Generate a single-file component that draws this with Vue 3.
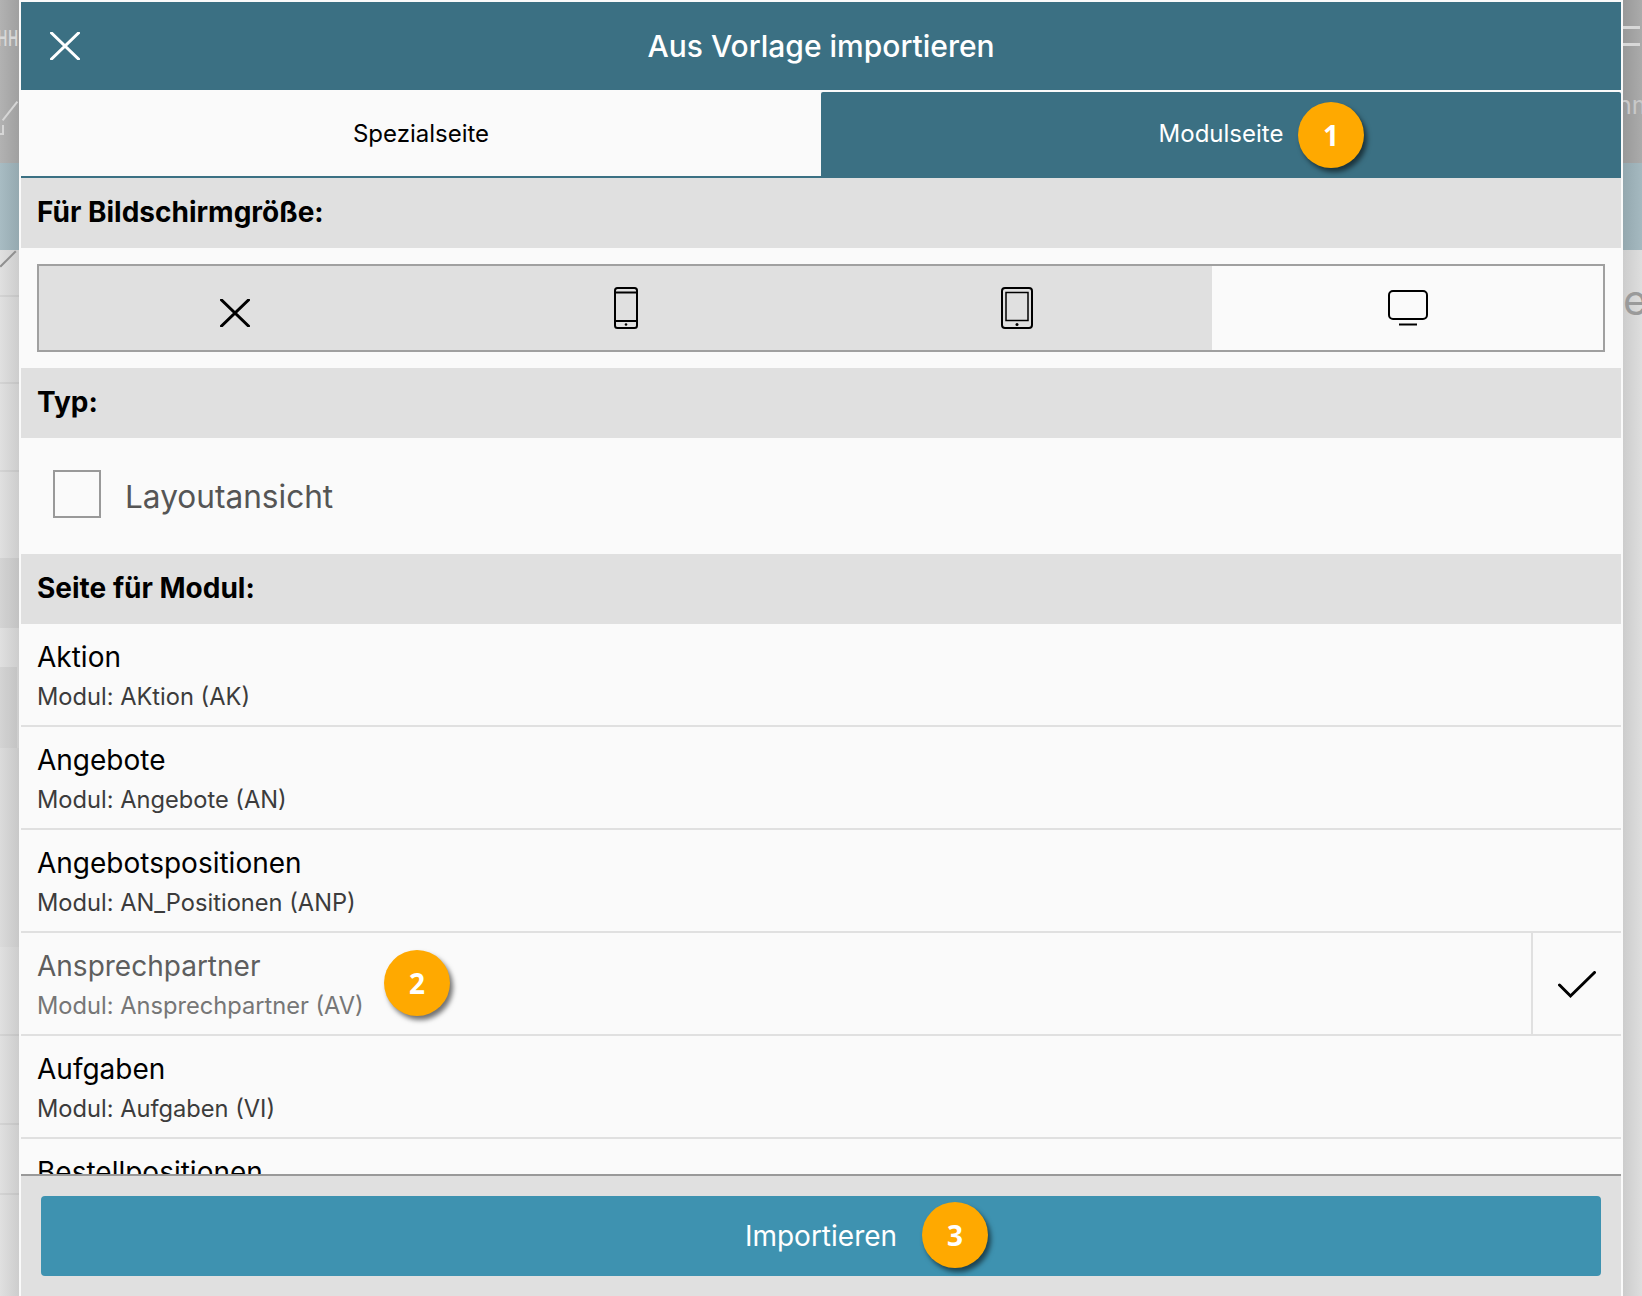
<script setup>
const rows = [
  { title: 'Aktion', sub: 'Modul: AKtion (AK)' },
  { title: 'Angebote', sub: 'Modul: Angebote (AN)' },
  { title: 'Angebotspositionen', sub: 'Modul: AN_Positionen (ANP)' },
  { title: 'Ansprechpartner', sub: 'Modul: Ansprechpartner (AV)', selected: true },
  { title: 'Aufgaben', sub: 'Modul: Aufgaben (VI)' },
  { title: 'Bestellpositionen', sub: 'Modul: Bestellpositionen (BP)' }
]
</script>

<template>
  <div class="page">
    <div class="strip left">
      <div class="band dark">
        <span class="ghost hh">HH</span>
        <span class="slash"></span>
        <span class="corner"></span>
      </div>
      <div class="band blue"></div>
      <div class="band light first">
        <span class="slash low"></span>
        <i class="rule r1"></i>
        <i class="rule r2"></i>
        <i class="rule r3"></i>
        <i class="patch p1"></i>
        <i class="patch p2"></i>
        <i class="patch p3"></i>
        <i class="rule r4"></i>
        <i class="rule r5"></i>
        <i class="rule r6"></i>
      </div>
    </div>

    <main class="modal">
      <header class="head">
        <svg class="close" width="30" height="28" viewBox="0 0 30 28"><path d="M1.5 1 28.500 27M28.500 1 1.500 27" /></svg>
        <h1>Aus Vorlage importieren</h1>
      </header>

      <nav class="tabs">
        <div class="tab">Spezialseite</div>
        <div class="tab active">Modulseite<span class="badge b1">1</span></div>
      </nav>

      <h2 class="section">Für Bildschirmgröße:</h2>
      <div class="pad">
        <div class="seg">
          <div class="seg-item">
            <svg class="x-icon" width="30" height="28" viewBox="0 0 30 28"><path d="M1.500 1 28.500 27M28.500 1 1.500 27" /></svg>
          </div>
          <div class="seg-item">
            <svg width="24" height="42" viewBox="0 0 24 42"><rect x="1" y="1" width="22" height="40" rx="2.500" /><path d="M1 5.500H23M1 34H23" /><circle cx="12" cy="37.500" r="1.300" class="dot" /></svg>
          </div>
          <div class="seg-item">
            <svg width="32" height="42" viewBox="0 0 32 42"><rect x="1" y="1" width="30" height="40" rx="3" /><rect x="5" y="5.500" width="22" height="28" class="thin" /><circle cx="16" cy="37.500" r="1.500" class="dot" /></svg>
          </div>
          <div class="seg-item on">
            <svg width="40" height="36" viewBox="0 0 40 36"><rect x="1" y="1" width="38" height="28" rx="4" /><path d="M11 34.500H29" /></svg>
          </div>
        </div>
      </div>

      <h2 class="section">Typ:</h2>
      <label class="check">
        <span class="box"></span>
        <span class="check-label">Layoutansicht</span>
      </label>

      <h2 class="section">Seite für Modul:</h2>
      <div class="list">
        <div v-for="row in rows" :key="row.title" class="row" :class="{ selected: row.selected }">
          <div class="row-text">
            <div class="row-title">{{ row.title }}</div>
            <div class="row-sub">{{ row.sub }}</div>
            <span v-if="row.selected" class="badge b2">2</span>
          </div>
          <div v-if="row.selected" class="row-check">
            <svg width="38" height="28" viewBox="0 0 38 28"><path d="M1.500 14 12.500 25 36.500 1.500" /></svg>
          </div>
        </div>
      </div>

      <footer class="foot">
        <button class="primary" type="button">Importieren<span class="badge b3">3</span></button>
      </footer>
    </main>

    <div class="strip right">
      <div class="band dark">
        <i class="dash d1"></i>
        <i class="dash d2"></i>
        <span class="ghost nm">nm</span>
      </div>
      <div class="band blue"></div>
      <div class="band light">
        <span class="ghost e">e</span>
      </div>
    </div>
  </div>
</template>

<style>
html, body { margin: 0; background: #d8d8d8; }
</style>

<style scoped>
* { box-sizing: border-box; }

.page {
  display: flex;
  width: 1642px;
  height: 1296px;
  overflow: hidden;
  font-family: Inter, "Noto Sans", sans-serif;
  color: #000;
}

.strip {
  width: 19px;
  flex: none;
  display: flex;
  flex-direction: column;
  overflow: hidden;
}

.band { position: relative; overflow: hidden; }
.band.dark { height: 163px; }
.band.blue { height: 87px; }
.band.light { flex: 1; }

.left .band.dark { background: linear-gradient(90deg, #b2b2b2, #a0a0a0); }
.left .band.blue { background: linear-gradient(90deg, #a8bcc3, #95a9b0); }
.left .band.light { background: linear-gradient(90deg, #e0e0e0, #cdcdcd); }
.right .band.dark { background: linear-gradient(90deg, #999, #ababab); }
.right .band.blue { background: linear-gradient(90deg, #94a8af, #a5b9c0); }
.right .band.light { background: linear-gradient(90deg, #cccccc, #dedede); }

.ghost { position: absolute; color: #d8d8d8; white-space: nowrap; }
.hh { right: 0; top: 24px; font-size: 13px; line-height: 28px; letter-spacing: 1px; font-weight: 600; transform: scaleY(1.7); }
.nm { left: -6px; top: 91px; font-size: 25px; line-height: 28px; color: #c9c9c9; }
.e { left: 0; top: 27px; font-size: 42px; line-height: 46px; color: #9a9a9a; }

.slash {
  position: absolute;
  left: -2px;
  top: 110px;
  width: 24px;
  height: 2px;
  background: #d6d6d6;
  transform: rotate(-52deg);
}
.slash.low { top: 8px; left: -3px; background: #8f8f8f; transform: rotate(-45deg); width: 22px; }
.corner {
  position: absolute;
  left: -2px;
  top: 125px;
  width: 6px;
  height: 10px;
  border-right: 2px solid #d6d6d6;
  border-bottom: 2px solid #d6d6d6;
}
.rule { position: absolute; left: 0; right: 0; height: 2px; background: rgba(0, 0, 0, 0.05); }
.r1 { top: 45px; }
.r2 { top: 132px; }
.r3 { top: 220px; }
.r4 { top: 784px; }
.r5 { top: 873px; }
.r6 { top: 943px; }
.patch { position: absolute; left: 0; background: rgba(0, 0, 0, 0.05); }
.p1 { top: 308px; width: 19px; height: 70px; }
.p2 { top: 417px; width: 17px; height: 81px; }
.p3 { top: 498px; width: 19px; height: 199px; background: rgba(0, 0, 0, 0.02); }
.dash { position: absolute; left: 0; width: 17px; height: 3px; background: #d8d8d8; }
.d1 { top: 26px; }
.d2 { top: 43px; }

.modal {
  flex: 1;
  min-width: 0;
  display: flex;
  flex-direction: column;
  background: #fafafa;
  border: solid #fafafa;
  border-width: 2px 2px 0;
}

.head {
  position: relative;
  flex: none;
  height: 88px;
  display: flex;
  align-items: center;
  justify-content: center;
  background: #3b7083;
  color: #fff;
}
.head h1 { margin: 0; font-size: 30px; font-weight: 500; line-height: 36px; }
.close { position: absolute; left: 29px; top: 30px; fill: none; stroke: #fff; stroke-width: 3; stroke-linecap: round; }

.tabs { flex: none; display: flex; height: 88px; }
.tab {
  position: relative;
  flex: 1;
  display: flex;
  align-items: center;
  justify-content: center;
  font-size: 24px;
  border-bottom: 2px solid #3b7083;
}
.tab.active {
  margin-top: 2px;
  padding-bottom: 2px;
  background: #3b7083;
  color: #fff;
  border-radius: 2px 2px 0 0;
}

.section {
  flex: none;
  height: 70px;
  margin: 0;
  padding: 0 16px 2px;
  display: flex;
  align-items: center;
  background: #e0e0e0;
  font-size: 28px;
  font-weight: 700;
}

.pad { flex: none; padding: 16px; }
.seg {
  display: grid;
  grid-template-columns: repeat(4, 1fr);
  height: 88px;
  border: 2px solid #a0a0a0;
  background: #e0e0e0;
}
.seg-item { position: relative; display: flex; align-items: center; justify-content: center; }
.seg-item.on { background: #fafafa; }
.seg-item svg { fill: none; stroke: #000; stroke-width: 2; }
.seg-item .x-icon { stroke-width: 3; stroke-linecap: round; margin-top: 10px; }
.seg-item .thin { stroke-width: 1.500; }
.seg-item .dot { fill: #000; stroke: none; }

.check { flex: none; height: 116px; display: flex; align-items: center; padding: 0 32px; gap: 24px; }
.box { width: 48px; height: 48px; border: 2px solid #999; margin-top: -4px; background: #fafafa; }
.check-label { font-size: 31.600px; color: #555; margin-top: 1px; }

.list { flex: 1; min-height: 0; overflow: hidden; }
.row { display: flex; height: 103px; border-bottom: 2px solid #e0e0e0; }
.row-text { position: relative; flex: 1; padding: 13px 16px 0; }
.row-title { font-size: 28px; line-height: 40px; }
.row-sub { font-size: 23.650px; line-height: 36px; color: #3c3c3c; margin-top: 2px; }
.selected .row-title { color: #5e5e5e; }
.selected .row-sub { color: #767676; }
.row-check {
  flex: none;
  width: 90px;
  border-left: 2px solid #e0e0e0;
  display: flex;
  align-items: center;
  justify-content: center;
  padding-top: 3px;
}
.row-check svg { fill: none; stroke: #000; stroke-width: 3; stroke-linecap: round; }

.foot {
  flex: none;
  height: 122px;
  padding: 20px 20px;
  border-top: 2px solid #999;
  background: #e0e0e0;
}
.primary {
  position: relative;
  display: block;
  width: 100%;
  height: 80px;
  border: 0;
  border-radius: 4px;
  background: #3e92b0;
  color: #fff;
  font: 400 28px Inter, "Noto Sans", sans-serif;
}

.badge {
  position: absolute;
  width: 66px;
  height: 66px;
  border-radius: 50%;
  background: #ffa900;
  color: #fff;
  display: flex;
  align-items: center;
  justify-content: center;
  font: 700 28px "Open Sans", sans-serif;
  box-shadow: 3px 4px 5px rgba(0, 0, 0, 0.55);
}
.b1 { left: 477px; top: 10px; }
.b2 { left: 363px; top: 17px; }
.b3 { left: 881px; top: 6px; }
</style>
